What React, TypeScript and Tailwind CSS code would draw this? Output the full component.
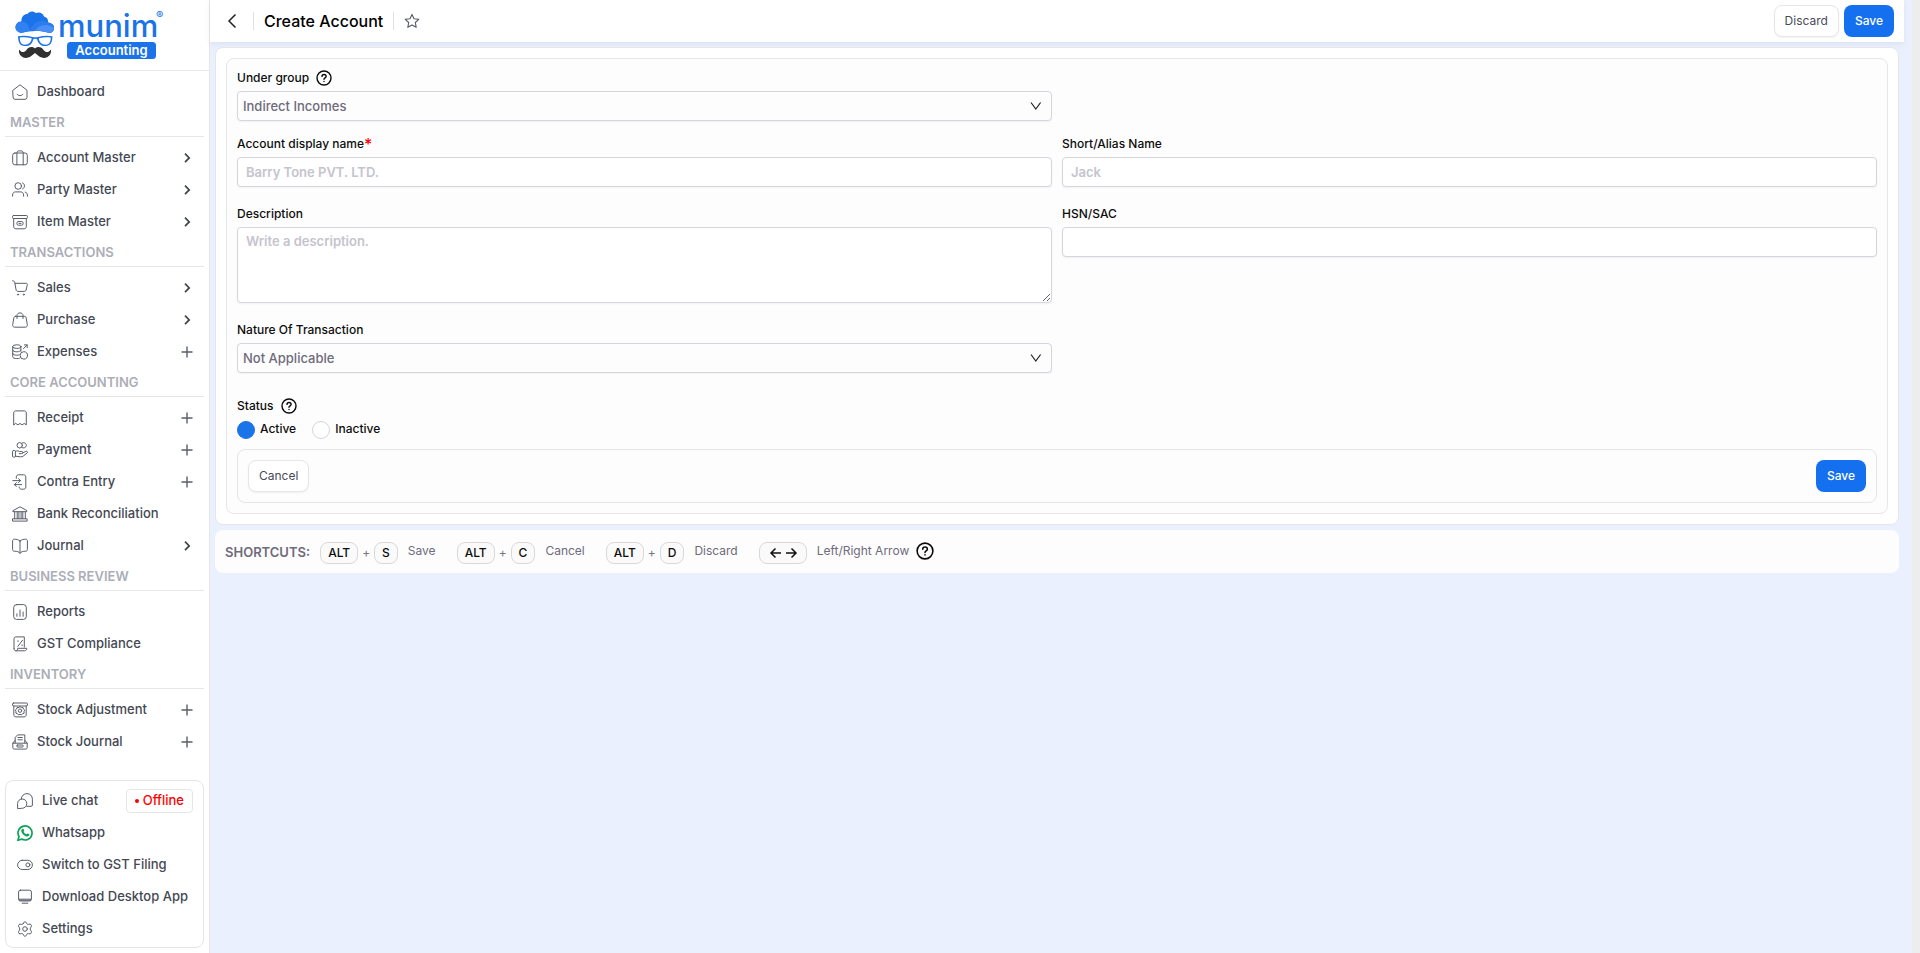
import React from 'react';

type Child = { children: React.ReactNode };

function Glyph({ children }: Child) {
  return (
    <svg
      viewBox="0 0 16 16"
      className="size-4 shrink-0 text-[#5a5e6a]"
      fill="none"
      stroke="currentColor"
      strokeWidth="1"
      strokeLinecap="round"
      strokeLinejoin="round"
      aria-hidden="true"
    >
      {children}
    </svg>
  );
}

const icons = {
  home: (
    <Glyph>
      <path d="M1 6.2 8 .8l7 5.400v7.100a2 2 0 0 1-2 2H3a2 2 0 0 1-2-2z" />
      <path d="M5 10.200c1.400 2 4.600 2 6 0" />
    </Glyph>
  ),
  briefcase: (
    <Glyph>
      <rect x=".7" y="3" width="14.600" height="11.800" rx="2.200" />
      <path d="M4.900 14.800V2.900c0-1.300.9-2 2-2h2.300c1.100 0 2 .7 2 2v11.900" />
    </Glyph>
  ),
  party: (
    <Glyph>
      <circle cx="6.200" cy="4" r="3.300" />
      <path d="M.6 14.200v-1.300c0-1.900 1.300-3 3-3h5c1.700 0 3 1.100 3 3v1.300M10.600.900c2.600.7 2.600 5.200 0 6M13.200 10.100c1.500.5 2.200 1.500 2.200 2.800v1.300" />
    </Glyph>
  ),
  archive: (
    <Glyph>
      <rect x=".6" y="1.500" width="14.800" height="3" rx=".8" />
      <path d="M1.700 4.500v8.200c0 1.300.9 2.100 2.100 2.100h8.400c1.200 0 2.100-.8 2.100-2.100V4.500" />
      <rect x="4.900" y="7.500" width="6.200" height="3.700" rx="1.500" />
      <path d="M7 9.400h2" />
    </Glyph>
  ),
  cart: (
    <Glyph>
      <path d="M.6.800c1.300 0 1.900.4 2.100 1.600l1.400 7.500c.2 1 .8 1.500 1.700 1.500h6.600c.9 0 1.500-.5 1.700-1.400l1.200-5.200c.2-.9-.3-1.500-1.100-1.500H3.100" />
      <circle cx="6" cy="14.600" r=".6" />
      <circle cx="11.800" cy="14.600" r=".6" />
    </Glyph>
  ),
  bag: (
    <Glyph>
      <path d="M3.600 4.300h8.800c1 0 1.500.5 1.700 1.400l1.200 7c.2 1.500-.6 2.500-2 2.500H2.700c-1.400 0-2.200-1-2-2.500l1.200-7c.2-.9.7-1.400 1.700-1.400z" />
      <path d="M5 6.500V3.400C5 .1 11 .1 11 3.400v3.100" />
    </Glyph>
  ),
  expenses: (
    <Glyph>
      <ellipse cx="4.800" cy="2.600" rx="4.100" ry="1.800" />
      <path d="M.7 2.600v10.200c0 1.100 1.800 1.800 4.100 1.800 1.100 0 2-.1 2.700-.4M8.900 2.600v4.700M.7 6c0 1.100 1.800 1.800 4.100 1.800S8.900 7.100 8.900 6M.7 9.400c0 1.100 1.800 1.800 4.100 1.800 1 0 1.800-.1 2.500-.4M11.400 4.700l3.700-3.700M12.400.9h2.800v2.800" />
      <circle cx="11.800" cy="11.400" r="3.700" />
    </Glyph>
  ),
  receipt: (
    <Glyph>
      <path d="M1.700 14.800V2.900c0-1.200.8-2 2-2h8.600c1.200 0 2 .8 2 2v11.900l-2.100-1.300-2.100 1.300L8 13.500l-2.100 1.300-2.100-1.300z" />
    </Glyph>
  ),
  payment: (
    <Glyph>
      <circle cx="7.700" cy="3.300" r="2.700" />
      <path d="M9.800 1.200c1.600-1.200 4.500-.3 4.500 2.100s-2.900 3.300-4.500 2.100" />
      <rect x=".5" y="8.500" width="2.900" height="6.600" rx=".9" />
      <path d="M3.400 9.400c2-1.200 3-.3 4.200.1h2.200c1.600 0 1.600 2.100 0 2.100H7.300M10.800 10.900l3-1.500c1.400-.6 2.300.8 1.200 1.700l-3.800 3c-.8.6-1.600.8-2.800.7l-5-.6" />
    </Glyph>
  ),
  contra: (
    <Glyph>
      <path d="M4.300 4.300V2.900c0-1.300.9-2.100 2.100-2.100h5.300c1.200 0 2.100.8 2.100 2.100v10.200c0 1.300-.9 2.100-2.100 2.100H9.400c-1.200 0-2.200-.8-2.200-2.200M.8 6.600h7.700M6.500 4.600l2 2-2 2M9.600 10.600H2.400M4.400 8.700l-2 1.900 2 2" />
    </Glyph>
  ),
  bank: (
    <Glyph>
      <path d="M1.200 4.500 8 .8l6.800 3.700v1.200H1.200zM.9 12.800h14.200v2.300H.9zM2.700 5.800v6.900M5.200 5.800v6.900M6.900 5.800v6.900M9.100 5.800v6.900M10.800 5.800v6.900M13.300 5.800v6.900" />
    </Glyph>
  ),
  book: (
    <Glyph>
      <path d="M8 3v12.300M8 3C6.500 1.500 4.300 1.200 2.300 1.200 1.200 1.200.6 1.900.6 2.900v8.700c0 1 .6 1.600 1.700 1.600 2.600 0 4.600.4 5.700 2.100 1.100-1.700 3.100-2.100 5.700-2.100 1.100 0 1.700-.6 1.700-1.600V2.900c0-1-.6-1.700-1.700-1.700C11.700 1.200 9.500 1.500 8 3z" />
    </Glyph>
  ),
  report: (
    <Glyph>
      <rect x="1.700" y=".6" width="12.600" height="14.800" rx="2.800" />
      <path d="M4.900 9.800v2.500M8 6v6.300M11.100 8v4.300" />
    </Glyph>
  ),
  gst: (
    <Glyph>
      <path d="M2 12.500V2.700C2 1.500 2.700.9 3.800.9h8.500v10.200M2 12.500c0 1.500.6 2.300 1.900 2.300h8.700c1.300 0 2.200-.9 2.200-2.500H5.700c0 1.500-.6 2.500-1.800 2.500M5.900 10.300l4.600-6M5.600 5.100h.8M9.700 9.200h.8" />
    </Glyph>
  ),
  stock: (
    <Glyph>
      <rect x=".6" y="1" width="14.800" height="3" rx=".8" />
      <path d="M1.800 4v8.700c0 1.300.9 2.200 2.200 2.200h8c1.300 0 2.200-.9 2.200-2.200V4" />
      <path d="m8 4.600 1.300 1 1.700-.1.400 1.600 1.300 1-.7 1.500.1 1.600-1.600.5-1.100 1.200L8 12.300l-1.400.6-1.100-1.200-1.600-.5.1-1.600-.7-1.500 1.300-1L5 5.500l1.700.1z" />
      <circle cx="8" cy="8.700" r="1.700" />
    </Glyph>
  ),
  stockJournal: (
    <Glyph>
      <path d="M3.200 8.800V3.400L5.700.9h7.100v7.900M6 3.500h4.300M6 5.800h4.300M3.200 6.300.8 9.200v4.500c0 .8.5 1.400 1.400 1.400h11.600c.9 0 1.400-.6 1.400-1.400V9.200l-2.400-2.900M.8 9.200h14.400" />
      <rect x="4.900" y="11" width="6.200" height="2" rx=".4" />
    </Glyph>
  ),
  chat: (
    <Glyph>
      <path d="M4.200 6.200C4.200 3 6.800.600 10 .600s5.400 2.400 5.400 5.600v5.800c0 .9-.5 1.300-1.300 1.300H9.700" />
      <path d="M.6 15.300v-4.700C.6 8 2.600 6 5.200 6s4.600 2 4.600 4.600-2 4.700-4.600 4.700z" />
    </Glyph>
  ),
  toggle: (
    <Glyph>
      <rect x=".6" y="3.300" width="14.800" height="9.200" rx="4.600" />
      <circle cx="10.900" cy="7.900" r="2" />
    </Glyph>
  ),
  desktop: (
    <Glyph>
      <rect x="1.600" y="1.200" width="12.800" height="10.800" rx="1.800" />
      <path d="M2 10.200h12M2.300 11.200h11.400M5.200 14.200h5.600" />
    </Glyph>
  ),
  settings: (
    <Glyph>
      <path d="M6.500 2.200C7 .2 9 .2 9.500 2.200c.3 1 1.300 1.500 2.200 1.100 1.900-.9 3.300.9 2.600 2.500-1.500 1.300-1.500 3.100 0 4.400.7 1.600-.7 3.400-2.600 2.500-.9-.4-1.900.1-2.200 1.100-.5 2-2.500 2-3 0-.3-1-1.300-1.500-2.200-1.100-1.900.9-3.300-.9-2.600-2.500 1.500-1.300 1.500-3.100 0-4.400C1 4.200 2.400 2.400 4.300 3.300c.9.4 1.900-.1 2.200-1.100z" />
      <circle cx="8" cy="8" r="2.300" />
    </Glyph>
  ),
  whatsapp: (
    <svg viewBox="0 0 16 16" className="size-4 shrink-0" fill="none" aria-hidden="true">
      <path d="M.9 15.200 2 11.500a7 7 0 1 1 2.700 2.600z" stroke="#12a15a" strokeWidth="1.700" />
      <path
        d="M5.400 3.800c.5-.3 1-.2 1.200.3l.6 1.300c.1.400-.5.900-.6 1.100.6 1.300 1.500 2.200 2.900 2.800.3-.1.800-1 1.200-.8l1.500.8c.3.200.1 1-.2 1.400-.8.900-2.200 1-3.300.5-2.200-.9-3.900-2.800-4.400-4.600-.2-1.100.2-2.200 1.100-2.800z"
        fill="#12a15a"
      />
    </svg>
  ),
};

type Item = { label: string; icon: keyof typeof icons; end?: 'more' | 'add' };

const sections: { title: string; items: Item[] }[] = [
  {
    title: 'MASTER',
    items: [
      { label: 'Account Master', icon: 'briefcase', end: 'more' },
      { label: 'Party Master', icon: 'party', end: 'more' },
      { label: 'Item Master', icon: 'archive', end: 'more' },
    ],
  },
  {
    title: 'TRANSACTIONS',
    items: [
      { label: 'Sales', icon: 'cart', end: 'more' },
      { label: 'Purchase', icon: 'bag', end: 'more' },
      { label: 'Expenses', icon: 'expenses', end: 'add' },
    ],
  },
  {
    title: 'CORE ACCOUNTING',
    items: [
      { label: 'Receipt', icon: 'receipt', end: 'add' },
      { label: 'Payment', icon: 'payment', end: 'add' },
      { label: 'Contra Entry', icon: 'contra', end: 'add' },
      { label: 'Bank Reconciliation', icon: 'bank' },
      { label: 'Journal', icon: 'book', end: 'more' },
    ],
  },
  {
    title: 'BUSINESS REVIEW',
    items: [
      { label: 'Reports', icon: 'report' },
      { label: 'GST Compliance', icon: 'gst' },
    ],
  },
  {
    title: 'INVENTORY',
    items: [
      { label: 'Stock Adjustment', icon: 'stock', end: 'add' },
      { label: 'Stock Journal', icon: 'stockJournal', end: 'add' },
    ],
  },
];

const utilities: Item[] = [
  { label: 'Live chat', icon: 'chat' },
  { label: 'Whatsapp', icon: 'whatsapp' },
  { label: 'Switch to GST Filing', icon: 'toggle' },
  { label: 'Download Desktop App', icon: 'desktop' },
  { label: 'Settings', icon: 'settings' },
];

function NavItem({ item }: { item: Item }) {
  return (
    <a href="#" className="flex h-8 items-center gap-[9px] pr-4 pl-3 text-[13px] font-medium text-[#444853]">
      {icons[item.icon]}
      <span className="grow">{item.label}</span>
      {item.end === 'more' && (
        <svg viewBox="0 0 12 12" className="size-3" fill="none" stroke="#3f434e" strokeWidth="1.700" aria-hidden="true">
          <path d="m4 1.700 4.200 4.200L4 10.100" />
        </svg>
      )}
      {item.end === 'add' && (
        <svg viewBox="0 0 12 12" className="size-3" fill="none" stroke="#5b5f6a" strokeWidth="1.400" aria-hidden="true">
          <path d="M6 .5v11M.5 6h11" />
        </svg>
      )}
    </a>
  );
}

function Logo() {
  return (
    <a href="#" aria-label="munim Accounting" className="flex h-[71px] shrink-0 items-center border-b border-[#e6e6e6] pl-[15px]">
      <svg viewBox="0 -8 160 66" className="h-[66px] w-40" aria-hidden="true">
        <path d="M6 23C1 22-.5 18 1 15c1-2.500 3-3.500 5.500-3.500C6 7 9 4 12.500 4 14 1 18 .5 21 3c3-1.500 7 0 8 3.500 3 .5 4.500 3.500 4 6 4 .5 6.500 3 6 6-.4 2.500-2 4-4 4.500C25 20 15 20.500 6 23z" fill="#1a73e8" />
        <path d="M6.500 11.500C11 11.500 14 15 15 21c-3 .3-6 1-9 2C1 22-.5 18 1 15c1-2.500 3-3.500 5.500-3.500z" fill="#3181f0" />
        <path d="M15 20.500C18 13 24 8 33 12.500c4 .5 6.500 3 6 6-.4 2.500-2 4-4 4.500-7-2-13-2.600-20-2.500z" fill="#2b7cee" />
        <path d="M20 20.500c3-4 8-6.500 13.500-5 3 .5 5.500 1.500 5.500 3-.4 2.500-2 4-4 4.500-5-1.700-10-2.400-15-2.500z" fill="#4a90f5" />
        <path d="M3 26.200c5-1 10-.5 14.500.7 1.800.5 3.700.5 5.500 0 4.500-1.200 9.500-1.700 14.500-.7-.3 5-1 9-6 9.700-5 .6-8.300-2-9.300-6.500-.6-1-3.300-1-4 0C17.300 34 14 36.500 9 36c-5-.8-5.700-4.800-6-9.800z" fill="#1a73e8" />
        <path d="M4.800 27.500c3.700-.5 8-.3 11.800.7.200 3-2.600 6.500-6.900 6.500-3.800 0-5-3.400-4.900-7.200zM35.700 27.500c-3.700-.5-8-.3-11.800.7-.2 3 2.600 6.500 6.900 6.500 3.800 0 5-3.400 4.900-7.200z" fill="#fff" />
        <path d="M20 38.500c2-2.300 6-2 8 .7 2.200 3 5 4.500 7.800.2 1.200 4-2.300 8.800-7.300 8.500-3.900-.2-6-2.900-8.500-4.800-2.500 1.900-4.600 4.600-8.500 4.800-5 .3-8.500-4.500-7.300-8.500 2.800 4.300 5.600 2.800 7.800-.2 2-2.700 6-3 8-.7z" fill="#303030" />
        <text x="43" y="27" fontFamily="Inter, sans-serif" fontSize="31" fontWeight="500" fill="#1a73e8">munim</text>
        <text x="141" y="9" fontFamily="Inter, sans-serif" fontSize="11" fontWeight="500" fill="#1a73e8">®</text>
        <rect x="52" y="32" width="89" height="17" rx="3.500" fill="#1a73e8" />
        <text x="96.500" y="44.800" textAnchor="middle" fontFamily="Inter, sans-serif" fontSize="13" fontWeight="600" fill="#fff">Accounting</text>
      </svg>
    </a>
  );
}

function Sidebar() {
  return (
    <aside className="flex w-[210px] shrink-0 flex-col border-r border-[#e6e6e6] bg-white">
      <Logo />
      <nav className="grow pt-[5px]">
        <NavItem item={{ label: 'Dashboard', icon: 'home' }} />
        {sections.map((section) => (
          <section key={section.title}>
            <h2 className="mx-[5px] mb-[5px] h-[29px] border-b border-[#e6e6e6] pl-[5px] text-[13px] leading-7 font-semibold text-[#acaeb7]">
              {section.title}
            </h2>
            {section.items.map((item) => (
              <NavItem key={item.label} item={item} />
            ))}
          </section>
        ))}
      </nav>
      <div className="mx-[5px] mb-[5px] rounded-lg border border-[#e6e6e6] pt-1 pb-0.5">
        {utilities.map((item) => (
          <a key={item.label} href="#" className="flex h-8 items-center gap-[9px] pr-2.5 pl-[11px] text-[13px] font-medium whitespace-nowrap text-[#444853]">
            {icons[item.icon]}
            <span>{item.label}</span>
            {item.icon === 'chat' && (
              <span className="ml-auto flex h-6 items-center gap-1 rounded border border-[#e6e6e6] px-2 text-[#ff0000]">
                <span className="size-1 rounded-full bg-[#ff0000]" />
                Offline
              </span>
            )}
          </a>
        ))}
      </div>
    </aside>
  );
}

function Help({ large = false }: { large?: boolean }) {
  return (
    <svg
      viewBox="0 0 16 16"
      className={large ? 'size-[18px]' : 'size-4'}
      fill="none"
      stroke="#0a0a0a"
      strokeWidth="1.400"
      strokeLinecap="round"
      role="img"
      aria-label="Help"
    >
      <circle cx="8" cy="8" r="7" />
      <path d="M6 6.400c0-2.600 4.100-2.600 4.100 0 0 1.400-2.100 1.500-2.100 2.900M8 11.400v.1" />
    </svg>
  );
}

const labelClass = 'flex h-[18px] items-center text-xs font-medium text-[#0d0d0d]';
const boxClass =
  'block w-full rounded border border-[#d6d5de] text-[13px] font-medium text-[#6e6b7b] shadow-xs outline-none placeholder:font-semibold placeholder:text-[#c5c4ce]';

function SelectField({ id, label, value, help }: { id: string; label: string; value: string; help?: boolean }) {
  return (
    <div className="flex flex-col gap-1">
      <div className="flex items-center gap-[7px]">
        <label htmlFor={id} className={labelClass}>{label}</label>
        {help && <Help />}
      </div>
      <div className="relative">
        <select id={id} defaultValue={value} className={`${boxClass} h-[30px] appearance-none bg-[#fdfdfd] pt-0.5 pl-[5px]`}>
          <option>{value}</option>
        </select>
        <svg viewBox="0 0 12 12" className="pointer-events-none absolute top-[9px] right-2.5 size-3" fill="none" stroke="#222" strokeWidth="1.200" aria-hidden="true">
          <path d="m1 2.500 4.800 6.500 4.800-6.500" />
        </svg>
      </div>
    </div>
  );
}

function TextField({ id, label, placeholder, required }: { id: string; label: string; placeholder?: string; required?: boolean }) {
  return (
    <div className="flex flex-col gap-1">
      <label htmlFor={id} className={labelClass}>
        {label}
        {required && <span className="text-base leading-none text-[#ff0000]">*</span>}
      </label>
      <input id={id} type="text" placeholder={placeholder} className={`${boxClass} h-[30px] bg-white px-2`} />
    </div>
  );
}

function Radio({ label, checked }: { label: string; checked?: boolean }) {
  return (
    <label className="flex h-[18px] items-center gap-[5px] text-xs font-medium text-[#0d0d0d]">
      <input
        type="radio"
        name="status"
        defaultChecked={checked}
        className="size-[18px] appearance-none rounded-full border border-[#d6d5de] bg-white checked:border-[#1a73e8] checked:bg-[#1a73e8]"
      />
      <span className="pb-0.5">{label}</span>
    </label>
  );
}

function Button({ primary, children }: Child & { primary?: boolean }) {
  return primary ? (
    <button type="button" className="h-8 rounded-lg bg-[#1570ef] px-[11px] text-xs font-medium text-white">{children}</button>
  ) : (
    <button type="button" className="h-8 rounded-lg border border-[#e6e6e6] bg-white px-2.5 text-xs text-[#484b57] shadow-xs">{children}</button>
  );
}

function Key({ children }: Child) {
  return (
    <kbd className="flex h-[22px] items-center rounded-lg border border-[#d9d9d9] bg-[#fafafa] px-[7px] font-[Inter,sans-serif] text-xs font-medium text-[#0d0d0d]">
      {children}
    </kbd>
  );
}

function Shortcut({ letter, label }: { letter: string; label: string }) {
  return (
    <div className="flex items-center gap-2.5">
      <div className="flex items-center gap-1">
        <Key>ALT</Key>
        <span className="text-xs text-[#77747f]">+</span>
        <Key>{letter}</Key>
      </div>
      <span className="pb-[3px]">{label}</span>
    </div>
  );
}

function TopBar() {
  return (
    <header className="mr-2 flex h-[42px] items-center bg-white pr-2.5 pl-[15px] shadow-[0_2px_5px_rgba(120,120,160,0.12)]">
      <button type="button" aria-label="Back" className="mr-3 flex size-4 items-center justify-center">
        <svg viewBox="0 0 16 16" className="size-4" fill="none" stroke="#222" strokeWidth="1.500" aria-hidden="true">
          <path d="M10.500 1.500 4 8l6.500 6.500" />
        </svg>
      </button>
      <h1 className="border-x border-[#e0e0e0] px-2.5 text-base leading-[18px] font-medium text-black">Create Account</h1>
      <button type="button" aria-label="Add to favourites" className="ml-2.5 flex size-4 items-center justify-center">
        <svg viewBox="0 0 16 16" className="size-4" fill="none" stroke="#555866" strokeWidth="1.100" strokeLinejoin="round" aria-hidden="true">
          <path d="m8 1.400 2 4.300 4.800.6-3.500 3.200.9 4.800L8 12l-4.200 2.300.9-4.800L1.200 6.300 6 5.700z" />
        </svg>
      </button>
      <div className="ml-auto flex gap-[5px]">
        <Button>Discard</Button>
        <Button primary>Save</Button>
      </div>
    </header>
  );
}

function AccountForm() {
  return (
    <form className="rounded-lg border border-[#e6e6ea] bg-white p-2.5">
      <div className="rounded-lg border border-[#e6e6e6] bg-[#fdfdfd] p-2.5">
        <div className="grid grid-cols-2 gap-x-2.5">
          <SelectField id="group" label="Under group" value="Indirect Incomes" help />
        </div>
        <div className="mt-3.5 grid grid-cols-2 gap-x-2.5 gap-y-[18px]">
          <TextField id="name" label="Account display name" placeholder="Barry Tone PVT. LTD." required />
          <TextField id="alias" label="Short/Alias Name" placeholder="Jack" />
          <div className="flex flex-col gap-1">
            <label htmlFor="description" className={labelClass}>Description</label>
            <textarea id="description" placeholder="Write a description." className={`${boxClass} h-[76px] bg-white px-2 py-1`} />
          </div>
          <TextField id="hsn" label="HSN/SAC" />
          <SelectField id="nature" label="Nature Of Transaction" value="Not Applicable" />
        </div>
        <fieldset className="mt-6">
          <legend className="flex h-[18px] items-center gap-2 text-xs font-medium text-[#0d0d0d]">
            Status
            <Help />
          </legend>
          <div className="mt-1.5 flex gap-4">
            <Radio label="Active" checked />
            <Radio label="Inactive" />
          </div>
        </fieldset>
        <div className="mt-2.5 flex justify-between rounded-lg border border-[#e6e6e6] p-2.5">
          <Button>Cancel</Button>
          <Button primary>Save</Button>
        </div>
      </div>
    </form>
  );
}

export default function App() {
  return (
    <div className="flex min-h-screen bg-[#eaf0fe] font-[Inter,sans-serif]">
      <Sidebar />
      <div className="min-w-0 grow">
        <TopBar />
        <main className="flex flex-col gap-[5px] py-[5px] pr-[13px] pl-[5px]">
          <AccountForm />
          <section aria-label="Keyboard shortcuts" className="flex h-[43px] items-center gap-[21px] rounded-lg bg-[#fdfdfd] px-2.5 pt-0.5 text-xs text-[#6e6b7b]">
            <div className="flex items-center gap-2.5">
              <h2 className="text-[13px] font-semibold">SHORTCUTS:</h2>
              <Shortcut letter="S" label="Save" />
            </div>
            <Shortcut letter="C" label="Cancel" />
            <Shortcut letter="D" label="Discard" />
            <div className="flex items-center gap-2.5">
              <Key>
                <svg viewBox="0 0 32 14" className="h-3.5 w-8" fill="none" stroke="#111" strokeWidth="1.500" aria-label="Left and right arrow keys">
                  <path d="M14 7H4M8.500 2.500 4 7l4.500 4.500M19 7h10M24.500 2.500 29 7l-4.500 4.500" />
                </svg>
              </Key>
              <span className="flex items-center gap-[7px] pb-[3px]">
                Left/Right Arrow
                <Help large />
              </span>
            </div>
          </section>
        </main>
      </div>
      <div className="w-2 shrink-0 bg-[#ededed]" aria-hidden="true" />
    </div>
  );
}
